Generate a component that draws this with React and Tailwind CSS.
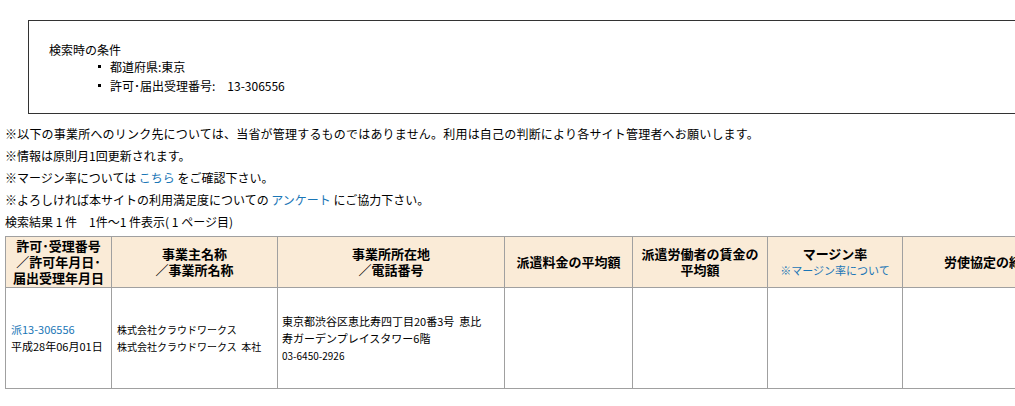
import React from 'react';

const font = { fontFamily: '"Noto Sans CJK JP", "Noto Sans", sans-serif' };

const notes = [
  <>※以下の事業所へのリンク先については、当省が管理するものではありません。利用は自己の判断により各サイト管理者へお願いします。</>,
  <>※情報は原則月1回更新されます。</>,
  <>
    ※マージン率については <a className="text-[#1a76b6]">こちら</a> をご確認下さい。
  </>,
  <>
    ※よろしければ本サイトの利用満足度についての <a className="text-[#1a76b6]">アンケート</a> にご協力下さい。
  </>,
  <>検索結果 1 件　1件～1 件表示( 1 ページ目)</>,
];

const Th = ({ w, children }) => (
  <th className={`${w} border border-[#a0a0a0] bg-[#faebd7] px-1 text-center align-middle text-[13px] font-bold leading-[16px] text-black`}>
    {children}
  </th>
);

export default function App() {
  return (
    <div className="w-[1015px] h-[406px] overflow-hidden bg-white text-black" style={font}>
      <div className="ml-[28px] mt-[20px] h-[94px] w-[1000px] border border-[#333] pl-[20px] pt-[19px] text-[12px] leading-[19px]">
        <div>検索時の条件</div>
        <ul className="mt-[-2px] pl-[49px]">
          <li className="flex items-center gap-[9px]">
            <span className="h-[3px] w-[3px] bg-black" />
            <span>都道府県:東京</span>
          </li>
          <li className="flex items-center gap-[9px]">
            <span className="h-[3px] w-[3px] bg-black" />
            <span>許可･届出受理番号:　13-306556</span>
          </li>
        </ul>
      </div>

      <div className="mt-[9px] pl-[5px] text-[12px] leading-[22px] whitespace-nowrap">
        {notes.map((n, i) => (
          <div key={i} className={i === 0 ? 'tracking-[0.2px]' : ''}>{n}</div>
        ))}
      </div>

      <table className="ml-[5px] mt-[3px] w-[1110px] table-fixed border-collapse">
        <thead>
          <tr className="h-[51px]">
            <Th w="w-[106px]">
              許可･受理番号
              <br />
              ／許可年月日･
              <br />
              届出受理年月日
            </Th>
            <Th w="w-[166px]">
              事業主名称
              <br />
              ／事業所名称
            </Th>
            <Th w="w-[227px]">
              事業所所在地
              <br />
              ／電話番号
            </Th>
            <Th w="w-[128px]">派遣料金の平均額</Th>
            <Th w="w-[135px]">
              派遣労働者の賃金の
              <br />
              平均額
            </Th>
            <Th w="w-[135px]">
              マージン率
              <br />
              <a className="text-[11px] font-normal text-[#1a76b6]">※マージン率について</a>
            </Th>
            <Th w="w-[213px]">労使協定の締結の有無</Th>
          </tr>
        </thead>
        <tbody>
          <tr className="h-[101px] text-[11px]">
            <td className="border border-[#a0a0a0] px-[5px] align-middle leading-[17px] whitespace-nowrap">
              <a className="text-[#1a76b6]">派13-306556</a>
              <br />
              平成28年06月01日
            </td>
            <td className="border border-[#a0a0a0] px-[5px] align-middle text-[10px] leading-[17px] whitespace-nowrap">
              株式会社クラウドワークス
              <br />
              株式会社クラウドワークス&nbsp;&nbsp;本社
            </td>
            <td className="border border-[#a0a0a0] px-[4px] align-middle leading-[17px]">
              <div className="w-[210px]">東京都渋谷区恵比寿四丁目20番3号&nbsp;&nbsp;恵比寿ガーデンプレイスタワー6階</div>
              <div className="text-[10px]">03-6450-2926</div>
            </td>
            <td className="border border-[#a0a0a0]" />
            <td className="border border-[#a0a0a0]" />
            <td className="border border-[#a0a0a0]" />
            <td className="border border-[#a0a0a0]" />
          </tr>
        </tbody>
      </table>
    </div>
  );
}
